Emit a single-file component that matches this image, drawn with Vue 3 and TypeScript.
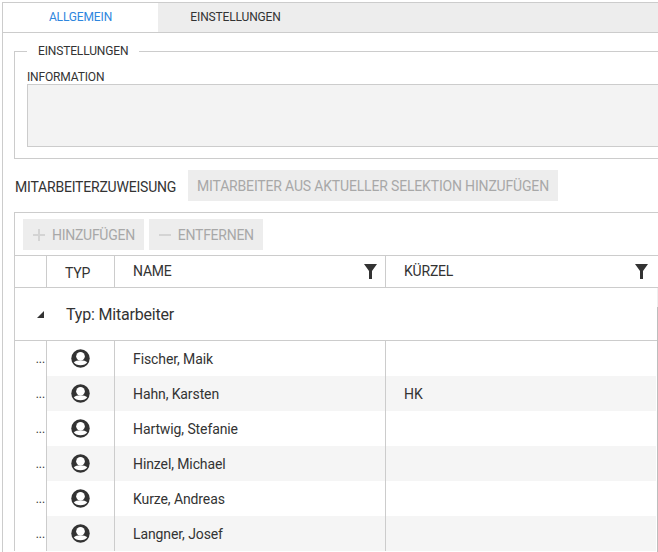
<script setup lang="ts">
interface Person {
  name: string
  short: string
}
const people: Person[] = [
  { name: 'Fischer, Maik', short: '' },
  { name: 'Hahn, Karsten', short: 'HK' },
  { name: 'Hartwig, Stefanie', short: '' },
  { name: 'Hinzel, Michael', short: '' },
  { name: 'Kurze, Andreas', short: '' },
  { name: 'Langner, Josef', short: '' },
]
</script>

<template>
  <div class="page">
    <div class="shell">
      <div class="tabs">
        <div class="tab active">ALLGEMEIN</div>
        <div class="tab">EINSTELLUNGEN</div>
      </div>
      <div class="content">
        <fieldset class="settings">
          <legend>EINSTELLUNGEN</legend>
          <div class="field-label">INFORMATION</div>
          <div class="info"></div>
        </fieldset>
        <div class="assign">
          <span class="assign-label">MITARBEITERZUWEISUNG</span>
          <button class="btn">MITARBEITER AUS AKTUELLER SELEKTION HINZUFÜGEN</button>
        </div>
        <div class="panel">
          <div class="toolbar">
            <button class="btn small">
              <svg class="tool-icon" viewBox="0 0 14 14"><path d="M6 1h2v5h5v2H8v5H6V8H1V6h5z" /></svg>
              HINZUFÜGEN
            </button>
            <button class="btn small">
              <svg class="tool-icon" viewBox="0 0 14 14"><path d="M1 6h12v2H1z" /></svg>
              ENTFERNEN
            </button>
          </div>
          <div class="row head">
            <div class="cell c0"></div>
            <div class="cell c1 type-head">TYP</div>
            <div class="cell c2">
              <span>NAME</span>
              <svg class="filter" viewBox="0 0 13 15"><path d="M0 0h13L8 7v8H5V7z" /></svg>
            </div>
            <div class="cell c3">
              <span>KÜRZEL</span>
              <svg class="filter" viewBox="0 0 13 15"><path d="M0 0h13L8 7v8H5V7z" /></svg>
            </div>
          </div>
          <div class="body">
            <div class="group">
              <svg class="caret" viewBox="0 0 8 8"><path d="M8 1v7H1z" /></svg>
              <span>Typ: Mitarbeiter</span>
            </div>
            <div v-for="(p, i) in people" :key="p.name" class="row item" :class="{ odd: i % 2 === 1 }">
              <div class="cell c0 dots">...</div>
              <div class="cell c1 tinted">
                <svg class="user" viewBox="0 0 19 19">
                  <circle cx="9.500" cy="9.500" r="9.200" fill="#333" />
                  <circle cx="9.500" cy="7.200" r="4.300" fill="#fff" />
                  <path d="M2.800 13.300C5 10.600 14 10.600 16.200 13.300 14.200 17.300 4.800 17.300 2.800 13.300z" fill="#fff" />
                </svg>
              </div>
              <div class="cell c2 tinted">{{ p.name }}</div>
              <div class="cell c3 tinted">{{ p.short }}</div>
            </div>
            <div class="scrollbar"></div>
          </div>
        </div>
      </div>
    </div>
  </div>
</template>

<style>
html,
body {
  margin: 0;
  background: #fff;
}
</style>

<style scoped>
.page {
  width: 658px;
  height: 552px;
  overflow: hidden;
  font-family: Roboto, "Liberation Sans", sans-serif;
  color: #333;
  background: #fff;
  box-sizing: border-box;
  padding: 2px 0 0 2px;
}
.shell {
  width: 760px;
  height: 700px;
  box-sizing: border-box;
  border-top: 1px solid #ccc;
  border-left: 1px solid #ccc;
}
.tabs {
  display: flex;
  height: 29px;
  background: #ededed;
  border-bottom: 1px solid #ccc;
}
.tab {
  width: 155px;
  line-height: 28px;
  text-align: center;
  font-size: 12px;
  letter-spacing: -0.15px;
  color: #333;
}
.tab.active {
  background: #fff;
  color: #2e86de;
  height: 29px;
}
.content {
  padding: 0 0 0 11px;
}
.settings {
  margin: 11px 0 0 0;
  padding: 0 12px 11px 12px;
  height: 115px;
  box-sizing: border-box;
  width: 720px;
  border: 1px solid #ccc;
}
.settings legend {
  padding: 0 11px;
  font-size: 12px;
  line-height: 14px;
  letter-spacing: -0.15px;
  color: #333;
}
.field-label {
  margin-top: 12px;
  font-size: 12px;
  line-height: 14px;
  letter-spacing: -0.15px;
}
.info {
  height: 61px;
  background: #f3f3f3;
  border: 1px solid #ccc;
}
.assign {
  display: flex;
  align-items: center;
  height: 31px;
  margin-top: 11px;
}
.assign-label {
  font-size: 14px;
  letter-spacing: -0.2px;
  margin-left: 1px;
  width: 173px;
  position: relative;
  top: 1px;
}
.btn {
  height: 31px;
  padding: 0 9px;
  border: 0;
  background: #ededed;
  color: #a8a8a8;
  font-family: inherit;
  font-size: 14px;
  letter-spacing: -0.17px;
  display: flex;
  align-items: center;
  white-space: nowrap;
}
.btn.small {
  letter-spacing: -0.27px;
}
.panel {
  margin-top: 11px;
  width: 720px;
  border-top: 1px solid #ccc;
  border-left: 1px solid #ccc;
}
.toolbar {
  display: flex;
  gap: 5px;
  padding: 6px 8px 5px;
}
.tool-icon {
  width: 14px;
  height: 14px;
  fill: #d4d4d4;
  margin-right: 6px;
}
.row {
  display: grid;
  grid-template-columns: 31px 68px 271px 271px;
}
.cell {
  box-sizing: border-box;
  display: flex;
  align-items: center;
  border-left: 1px solid #ccc;
  padding-left: 18px;
  padding-right: 8px;
  font-size: 14px;
  letter-spacing: -0.1px;
}
.c0 {
  border-left: 0;
  padding: 0;
}
.head {
  height: 33px;
  border-top: 1px solid #ccc;
  border-bottom: 1px solid #ccc;
  box-sizing: border-box;
}
.head .cell {
  justify-content: space-between;
  font-size: 14px;
  letter-spacing: -0.2px;
  padding-bottom: 1px;
}
.head .type-head {
  padding-left: 18px;
  padding-bottom: 0;
  padding-top: 2px;
}
.filter {
  width: 13px;
  height: 15px;
  fill: #333;
  flex: none;
}
.body {
  position: relative;
  width: 642px;
}
.group {
  display: flex;
  align-items: center;
  height: 53px;
  box-sizing: border-box;
  border-bottom: 1px solid #ccc;
  font-size: 16px;
  letter-spacing: -0.19px;
}
.caret {
  width: 8px;
  height: 8px;
  margin-left: 21px;
  margin-right: 22px;
  fill: #333;
}
.item {
  height: 35px;
}
.dots {
  justify-content: flex-end;
  font-size: 12px;
  padding-right: 1px;
  color: #333;
}
.c1.tinted {
  justify-content: center;
  padding: 0;
}
.odd .tinted {
  background: #f5f5f5;
}
.user {
  width: 19px;
  height: 19px;
}
.scrollbar {
  position: absolute;
  right: -2px;
  top: 0;
  box-sizing: border-box;
  width: 2px;
  height: 280px;
  background: #bdbdbd;
  border-top: 19px solid #eee;
}
</style>
